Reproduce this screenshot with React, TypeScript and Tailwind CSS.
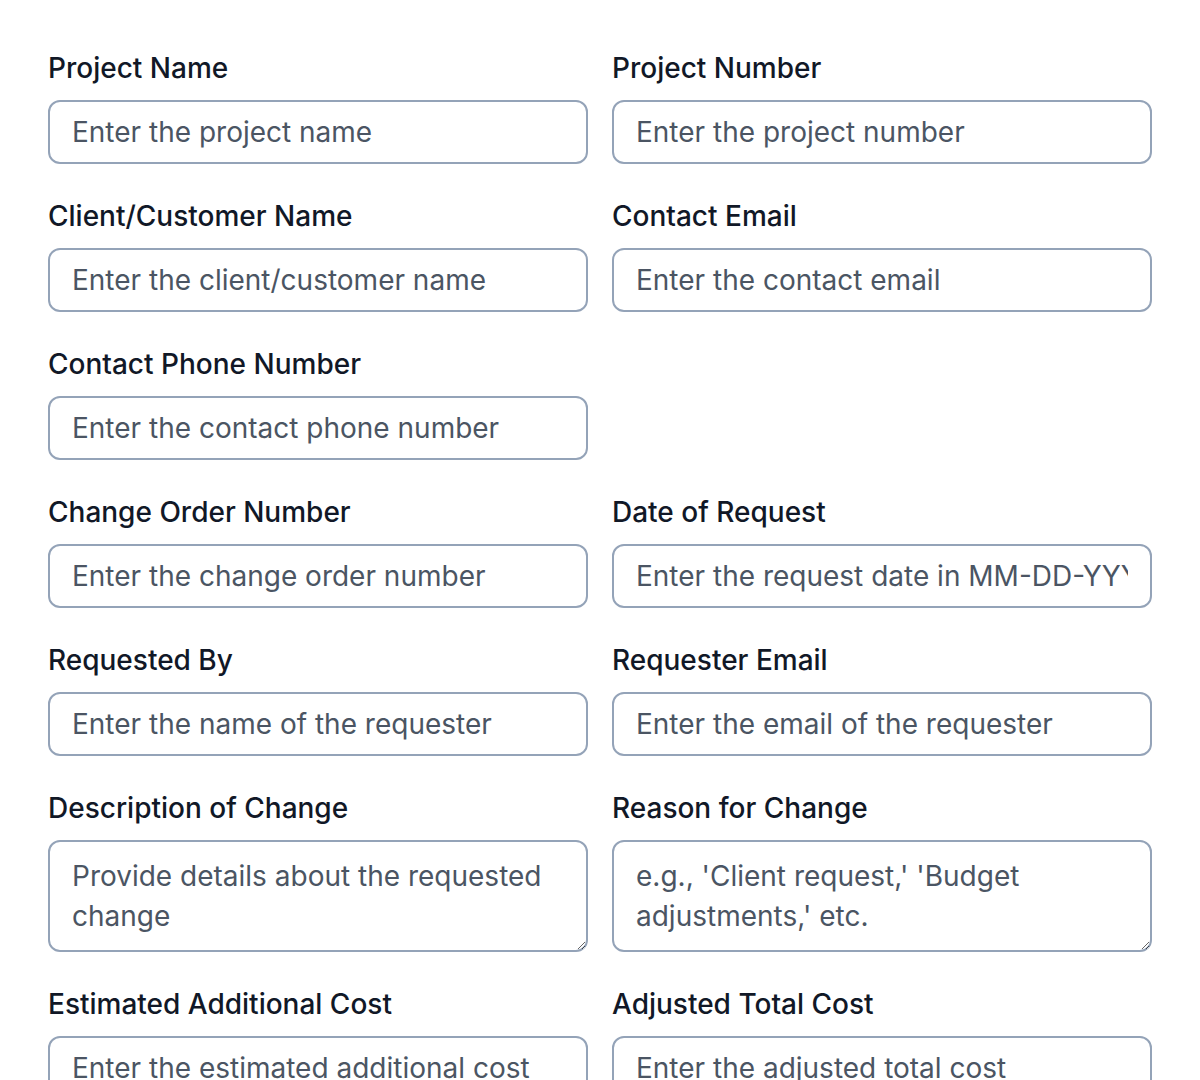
import React from 'react';

type Field = {
    label: string;
    placeholder: string;
    multiline?: boolean;
} | null;

const fields: Field[] = [
    { label: 'Project Name', placeholder: 'Enter the project name' },
    { label: 'Project Number', placeholder: 'Enter the project number' },
    { label: 'Client/Customer Name', placeholder: 'Enter the client/customer name' },
    { label: 'Contact Email', placeholder: 'Enter the contact email' },
    { label: 'Contact Phone Number', placeholder: 'Enter the contact phone number' },
    null,
    { label: 'Change Order Number', placeholder: 'Enter the change order number' },
    { label: 'Date of Request', placeholder: 'Enter the request date in MM-DD-YYYY format' },
    { label: 'Requested By', placeholder: 'Enter the name of the requester' },
    { label: 'Requester Email', placeholder: 'Enter the email of the requester' },
    { label: 'Description of Change', placeholder: 'Provide details about the requested change', multiline: true },
    { label: 'Reason for Change', placeholder: "e.g., 'Client request,' 'Budget adjustments,' etc.", multiline: true },
    { label: 'Estimated Additional Cost', placeholder: 'Enter the estimated additional cost' },
    { label: 'Adjusted Total Cost', placeholder: 'Enter the adjusted total cost' },
];

const inputClass =
    'w-full border-2 border-[#94a3b8] rounded-[12px] px-[22px] text-[28px] leading-[40px] text-[#0f172a] placeholder:text-[#4b5563] bg-white focus:outline-none';

export default function App() {
    return (
        <div className="min-h-screen bg-white p-[48px] font-['Inter',sans-serif]">
            <div className="grid grid-cols-2 gap-x-[24px] gap-y-[32px]">
                {fields.map((f, i) =>
                    f ? (
                        <div key={i} className="flex flex-col gap-[12px]">
                            <label className="text-[28px] leading-[40px] font-medium text-[#111827]">{f.label}</label>
                            {f.multiline ? (
                                <textarea
                                    placeholder={f.placeholder}
                                    className={inputClass + ' h-[112px] py-[14px]'}
                                />
                            ) : (
                                <input
                                    type="text"
                                    placeholder={f.placeholder}
                                    className={inputClass + ' h-[64px]'}
                                />
                            )}
                        </div>
                    ) : (
                        <div key={i} />
                    )
                )}
            </div>
        </div>
    );
}
